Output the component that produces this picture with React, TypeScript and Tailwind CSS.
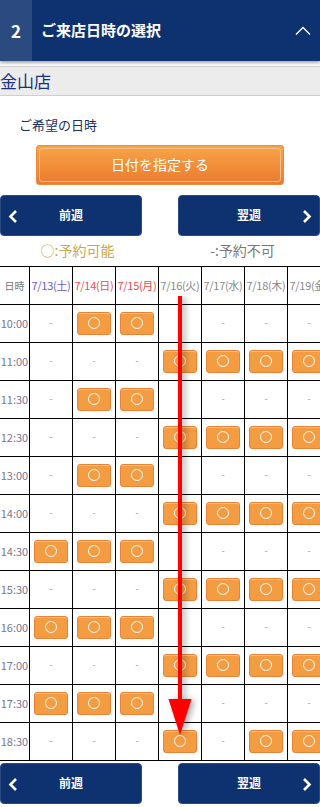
import React from "react";

const dates = [
  { label: "7/13(土)", color: "text-[#6b5bd6]" },
  { label: "7/14(日)", color: "text-[#f04b4b]" },
  { label: "7/15(月)", color: "text-[#f04b4b]" },
  { label: "7/16(火)", color: "text-[#888888]" },
  { label: "7/17(水)", color: "text-[#888888]" },
  { label: "7/18(木)", color: "text-[#888888]" },
  { label: "7/19(金)", color: "text-[#888888]" },
];

// 1 = 予約可能, 0 = 予約不可
const slots: { time: string; open: number[] }[] = [
  { time: "10:00", open: [0, 1, 1, 0, 0, 0, 0] },
  { time: "11:00", open: [0, 0, 0, 1, 1, 1, 1] },
  { time: "11:30", open: [0, 1, 1, 0, 0, 0, 0] },
  { time: "12:30", open: [0, 0, 0, 1, 1, 1, 1] },
  { time: "13:00", open: [0, 1, 1, 0, 0, 0, 0] },
  { time: "14:00", open: [0, 0, 0, 1, 1, 1, 1] },
  { time: "14:30", open: [1, 1, 1, 0, 0, 0, 0] },
  { time: "15:30", open: [0, 0, 0, 1, 1, 1, 1] },
  { time: "16:00", open: [1, 1, 1, 0, 0, 0, 0] },
  { time: "17:00", open: [0, 0, 0, 1, 1, 1, 1] },
  { time: "17:30", open: [1, 1, 1, 0, 0, 0, 0] },
  { time: "18:30", open: [0, 0, 0, 1, 0, 1, 1] },
];

const WeekButtons: React.FC = () => (
  <div className="flex justify-between">
    <button className="relative flex h-[41px] w-[142px] items-center justify-center rounded-[4px] border border-[#2c4a80] bg-[#0e3170] text-[12px] font-bold text-white">
      <svg className="absolute left-[7px] top-[13px]" width="10" height="15" viewBox="0 0 10 15">
        <path d="M8 2 L2.5 7.5 L8 13" fill="none" stroke="white" strokeWidth="2.6" />
      </svg>
      前週
    </button>
    <button className="relative flex h-[41px] w-[142px] items-center justify-center rounded-[4px] border border-[#2c4a80] bg-[#0e3170] text-[12px] font-bold text-white">
      翌週
      <svg className="absolute right-[7px] top-[13px]" width="10" height="15" viewBox="0 0 10 15">
        <path d="M2 2 L7.5 7.5 L2 13" fill="none" stroke="white" strokeWidth="2.6" />
      </svg>
    </button>
  </div>
);

const SlotButton: React.FC = () => (
  <div className="mx-auto flex h-[23px] w-[34px] items-center justify-center rounded-[3px] border border-[#ea8238] bg-[#f39c42] shadow-[inset_0_1px_0_#f8c185]">
    <span className="block h-[12px] w-[12px] rounded-full border-[1.5px] border-white" />
  </div>
);

export default function App() {
  return (
    <div
      className="relative h-[807px] w-[320px] overflow-hidden bg-white"
      style={{ fontFamily: '"Noto Sans CJK JP", "Noto Sans", sans-serif' }}
    >
      {/* header */}
      <div className="flex h-[61px] items-center bg-[#0e3170] text-white shadow-[0_2px_3px_rgba(0,0,0,0.35)]">
        <div className="flex h-full w-[32px] items-center justify-center bg-[#2a4a80] text-[17px] font-bold">2</div>
        <div className="ml-[9px] flex-1 text-[15px] font-bold">ご来店日時の選択</div>
        <svg className="mr-[9px]" width="16" height="10" viewBox="0 0 16 10">
          <path d="M1 8.5 L8 1.5 L15 8.5" fill="none" stroke="white" strokeWidth="1.3" />
        </svg>
      </div>

      <div className="mt-[5px] flex h-[30px] items-center border-y border-[#cfcfcf] bg-[#ececec] text-[17px] text-[#1a2f86]">
        金山店
      </div>

      <div className="mt-[19px] pl-[19px] text-[13px] text-[#1a2f5e]">ご希望の日時</div>

      <div className="ml-[36px] mt-[10px] flex h-[40px] w-[248px] items-center justify-center rounded-[3px] border border-[#ee8a3c] bg-gradient-to-b from-[#f7a446] to-[#eb7a31] p-[2px]">
        <div className="flex h-full w-full items-center justify-center rounded-[3px] border border-[#f8c08a] text-[14px] text-white">
          日付を指定する
        </div>
      </div>

      <div className="mt-[10px]">
        <WeekButtons />
      </div>

      <div className="flex h-[30px] items-center text-[14px]">
        <div className="flex-1 text-center text-[#c9a84a]">○:予約可能</div>
        <div className="flex-1 pl-[10px] text-center text-[#777777]">-:予約不可</div>
      </div>

      {/* table */}
      <div className="relative overflow-hidden">
        <div className="w-[332px] border-t border-black">
          <div className="flex h-[38px] border-b border-black">
            <div className="flex w-[30px] items-center justify-center border-r border-black text-[10px] text-[#777777]">日時</div>
            {dates.map((d) => (
              <div
                key={d.label}
                className={`flex w-[43px] shrink-0 items-center justify-center whitespace-nowrap border-r border-black text-[11px] tracking-[-0.3px] ${d.color}`}
              >
                {d.label}
              </div>
            ))}
          </div>
          {slots.map((s) => (
            <div key={s.time} className="flex h-[38px] border-b border-black">
              <div className="flex w-[30px] shrink-0 items-center justify-center border-r border-black text-[11px] text-[#7a7690]">
                {s.time}
              </div>
              {s.open.map((o, i) => (
                <div
                  key={i}
                  className="flex w-[43px] shrink-0 items-center justify-center border-r border-black text-[9px] text-[#999999]"
                >
                  {o ? <SlotButton /> : "-"}
                </div>
              ))}
            </div>
          ))}
        </div>

        {/* red arrow annotation */}
        <svg
          className="pointer-events-none absolute left-[160px] top-[28px]"
          width="40"
          height="450"
          viewBox="0 0 40 450"
          style={{ filter: "drop-shadow(3px 1px 3px rgba(0,0,0,0.35))" }}
        >
          <rect x="18" y="2" width="4" height="410" fill="#ff0000" />
          <path d="M8.5 405 L31.5 405 L20 441 Z" fill="#ff0000" />
        </svg>
      </div>

      <div className="mt-[2px]">
        <WeekButtons />
      </div>
    </div>
  );
}
